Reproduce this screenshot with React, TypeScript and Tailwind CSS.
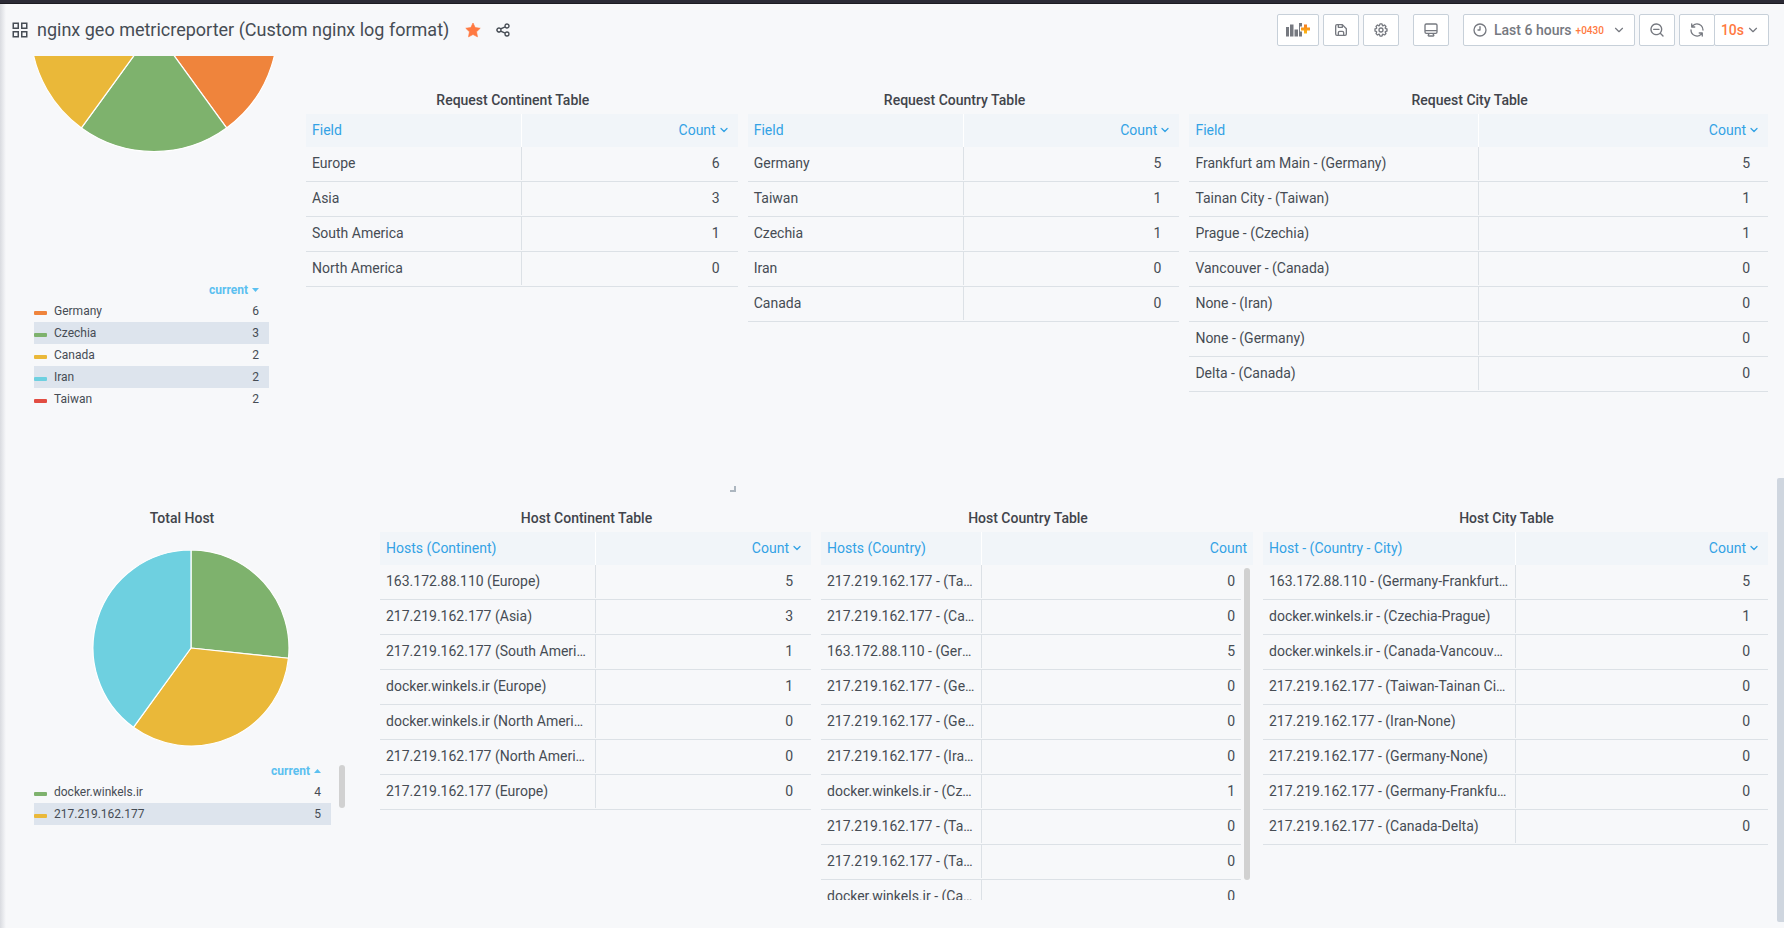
import React from "react";
import { ChevronDown } from "lucide-react";

type Row = [string, number];

const requestContinent: Row[] = [
  ["Europe", 6],
  ["Asia", 3],
  ["South America", 1],
  ["North America", 0],
];

const requestCountry: Row[] = [
  ["Germany", 5],
  ["Taiwan", 1],
  ["Czechia", 1],
  ["Iran", 0],
  ["Canada", 0],
];

const requestCity: Row[] = [
  ["Frankfurt am Main - (Germany)", 5],
  ["Tainan City - (Taiwan)", 1],
  ["Prague - (Czechia)", 1],
  ["Vancouver - (Canada)", 0],
  ["None - (Iran)", 0],
  ["None - (Germany)", 0],
  ["Delta - (Canada)", 0],
];

const hostContinent: Row[] = [
  ["163.172.88.110 (Europe)", 5],
  ["217.219.162.177 (Asia)", 3],
  ["217.219.162.177 (South America)", 1],
  ["docker.winkels.ir (Europe)", 1],
  ["docker.winkels.ir (North America)", 0],
  ["217.219.162.177 (North America)", 0],
  ["217.219.162.177 (Europe)", 0],
];

const hostCountry: Row[] = [
  ["217.219.162.177 - (Taiwan)", 0],
  ["217.219.162.177 - (Canada)", 0],
  ["163.172.88.110 - (Germany)", 5],
  ["217.219.162.177 - (Germany)", 0],
  ["217.219.162.177 - (Germany)", 0],
  ["217.219.162.177 - (Iran, Islamic Republic)", 0],
  ["docker.winkels.ir - (Czechia)", 1],
  ["217.219.162.177 - (Taiwan)", 0],
  ["217.219.162.177 - (Taiwan)", 0],
  ["docker.winkels.ir - (Canada)", 0],
];

const hostCity: Row[] = [
  ["163.172.88.110 - (Germany-Frankfurt am Main)", 5],
  ["docker.winkels.ir - (Czechia-Prague)", 1],
  ["docker.winkels.ir - (Canada-Vancouver)", 0],
  ["217.219.162.177 - (Taiwan-Tainan City)", 0],
  ["217.219.162.177 - (Iran-None)", 0],
  ["217.219.162.177 - (Germany-None)", 0],
  ["217.219.162.177 - (Germany-Frankfurt am Main)", 0],
  ["217.219.162.177 - (Canada-Delta)", 0],
];

type Slice = { value: number; color: string };

const countrySlices: Slice[] = [
  { value: 6, color: "#EF843C" },
  { value: 3, color: "#7EB26D" },
  { value: 2, color: "#EAB839" },
  { value: 2, color: "#6ED0E0" },
  { value: 2, color: "#E24D42" },
];

const hostSlices: Slice[] = [
  { value: 4, color: "#7EB26D" },
  { value: 5, color: "#EAB839" },
  { value: 6, color: "#6ED0E0" },
];

function PieSlices({ slices, cx, cy, r }: { slices: Slice[]; cx: number; cy: number; r: number }) {
  const total = slices.reduce((sum, s) => sum + s.value, 0);
  let angle = 0;
  return (
    <g stroke="#ffffff" strokeWidth="1.2" strokeLinejoin="round">
      {slices.map((s, i) => {
        const start = angle;
        const end = angle + (s.value / total) * Math.PI * 2;
        angle = end;
        const large = end - start > Math.PI ? 1 : 0;
        const d = `M${cx} ${cy}L${cx + r * Math.sin(start)} ${cy - r * Math.cos(start)}A${r} ${r} 0 ${large} 1 ${cx + r * Math.sin(end)} ${cy - r * Math.cos(end)}Z`;
        return <path key={i} d={d} fill={s.color} />;
      })}
    </g>
  );
}

function DataTable({
  title,
  field,
  rows,
  cols,
  scroll = false,
}: {
  title: string;
  field: string;
  rows: Row[];
  cols: string;
  scroll?: boolean;
}) {
  return (
    <section className="min-w-0">
      <h2 className="h-7 pr-[18px] text-center text-sm leading-7 font-medium text-[#41444b]">{title}</h2>
      <div className={scroll ? "relative h-[368px] overflow-hidden" : ""}>
        <table className="block w-full">
          <thead className="block">
            <tr className={`grid h-[33px] bg-[#f1f5f9] text-[#33a2e5] ${cols}`}>
              <th className="truncate border-r border-white pl-1.5 text-left text-sm leading-8 font-normal">{field}</th>
              <th className={`flex h-8 items-center justify-end text-sm leading-8 font-normal ${scroll ? "pr-1.5" : "pr-2"}`}>
                Count
                {!scroll && <ChevronDown className="ml-0.5 size-3" strokeWidth={2.6} />}
              </th>
            </tr>
          </thead>
          <tbody className={scroll ? "block pr-3" : "block"}>
            {rows.map(([name, count], i) => (
              <tr key={i} className={`grid h-[35px] border-b border-[#dce1e6] pb-px ${cols}`}>
                <td className="truncate border-r border-[#dce1e6] pr-1.5 pl-1.5 text-sm leading-8">{name}</td>
                <td className={`text-right text-sm leading-8 ${scroll ? "pr-1.5" : "pr-[18px]"}`}>{count}</td>
              </tr>
            ))}
          </tbody>
        </table>
        {scroll && <div className="absolute top-9 right-[3px] h-[312px] w-1.5 rounded-full bg-[#d1d1d1]" />}
      </div>
    </section>
  );
}

type LegendRow = { name: string; value: number; swatch: string };

function Legend({ rows, ascending = false }: { rows: LegendRow[]; ascending?: boolean }) {
  return (
    <table className="block w-full text-xs">
      <thead className="block">
        <tr className="flex h-[22px] justify-end pt-0.5 pr-2.5">
          <th className="flex items-center gap-1 font-bold text-[#5bc0f0]">
            current
            <svg className="w-[7px]" viewBox="0 0 7 4" fill="currentColor" aria-hidden="true">
              {ascending ? <path d="M0 4h7L3.500 0z" /> : <path d="M0 0h7L3.500 4z" />}
            </svg>
          </th>
        </tr>
      </thead>
      <tbody className="block">
        {rows.map((row) => (
          <tr key={row.name} className="flex h-[22px] items-center pr-2.5 even:bg-[#dde4ed]">
            <td className="flex flex-1 items-center gap-[7px]">
              <span className={`mt-1 h-1 w-[13px] rounded-[1px] ${row.swatch}`} />
              {row.name}
            </td>
            <td>{row.value}</td>
          </tr>
        ))}
      </tbody>
    </table>
  );
}

const iconButton =
  "flex h-8 w-9 items-center justify-center rounded-xs border border-[#c7d0d9] bg-white text-[#767980]";

function Toolbar() {
  return (
    <div className="flex items-center gap-1">
      <button aria-label="Add panel" className="flex h-8 w-[42px] items-center justify-center rounded-xs border border-[#c7d0d9] bg-white text-[#767980]">
        <svg className="h-4 w-[26px]" viewBox="0 0 26 16" aria-hidden="true">
          <defs>
            <linearGradient id="plus" x1="0" y1="0" x2="0" y2="1">
              <stop offset="0" stopColor="#f47b20" />
              <stop offset="1" stopColor="#fdb913" />
            </linearGradient>
          </defs>
          <path fill="currentColor" d="M1 5h3v9.500H1zM5 2.500h3.500v12H5zM9.500 7.500H13v7H9.500zM14 1h3v3.500h-2v5h2v5h-3z" />
          <path fill="url(#plus)" d="M19 2.500h3v3h3v3h-3v3h-3v-3h-3v-3h3z" />
        </svg>
      </button>
      <button aria-label="Save dashboard" className={iconButton}>
        <svg className="size-4" viewBox="0 0 24 24" fill="currentColor" aria-hidden="true">
          <path d="m20.710 9.290-6-6a1 1 0 0 0-.320-.210A1.090 1.090 0 0 0 14 3H6a3 3 0 0 0-3 3v12a3 3 0 0 0 3 3h12a3 3 0 0 0 3-3v-8a1 1 0 0 0-.290-.710ZM9 5h4v2H9Zm6 14H9v-3a1 1 0 0 1 1-1h4a1 1 0 0 1 1 1Zm4-1a1 1 0 0 1-1 1h-1v-3a3 3 0 0 0-3-3h-4a3 3 0 0 0-3 3v3H6a1 1 0 0 1-1-1V6a1 1 0 0 1 1-1h1v3a1 1 0 0 0 1 1h6a1 1 0 0 0 1-1V6.410l4 4Z" />
        </svg>
      </button>
      <button aria-label="Dashboard settings" className={iconButton}>
        <svg className="size-4" viewBox="0 0 24 24" fill="currentColor" aria-hidden="true">
          <path d="m21.320 9.550-1.890-.630.890-1.780A1 1 0 0 0 20.130 6L18 3.870a1 1 0 0 0-1.150-.190l-1.780.890-.630-1.890A1 1 0 0 0 13.500 2h-3a1 1 0 0 0-.950.680l-.630 1.890-1.780-.890A1 1 0 0 0 6 3.870L3.870 6a1 1 0 0 0-.190 1.150l.890 1.780-1.890.630A1 1 0 0 0 2 10.500v3a1 1 0 0 0 .680.950l1.890.630-.890 1.780A1 1 0 0 0 3.870 18L6 20.130a1 1 0 0 0 1.150.190l1.780-.890.630 1.890a1 1 0 0 0 .950.680h3a1 1 0 0 0 .950-.680l.630-1.890 1.780.890a1 1 0 0 0 1.130-.190L20.130 18a1 1 0 0 0 .190-1.150l-.890-1.780 1.890-.630A1 1 0 0 0 22 13.500v-3a1 1 0 0 0-.680-.950ZM20 12.780l-1.200.400a2 2 0 0 0-1.220 2.830l.570 1.140-1.100 1.100-1.140-.570a2 2 0 0 0-2.830 1.200l-.400 1.200h-1.560l-.400-1.200a2 2 0 0 0-2.830-1.200l-1.140.570-1.100-1.100.570-1.140a2 2 0 0 0-1.200-2.830l-1.200-.400v-1.560l1.200-.400a2 2 0 0 0 1.200-2.830l-.570-1.140 1.100-1.100 1.140.570a2 2 0 0 0 2.830-1.200l.400-1.200h1.560l.400 1.200a2 2 0 0 0 2.830 1.200l1.140-.570 1.100 1.100-.570 1.140a2 2 0 0 0 1.200 2.830l1.200.400ZM12 8a4 4 0 1 0 0 8 4 4 0 0 0 0-8Zm0 6a2 2 0 1 1 0-4 2 2 0 0 1 0 4Z" />
        </svg>
      </button>
      <button aria-label="Cycle view mode" className={`mx-2.5 ${iconButton}`}>
        <svg className="size-4" viewBox="0 0 24 24" fill="currentColor" aria-hidden="true">
          <path d="M19 2H5a3 3 0 0 0-3 3v10a3 3 0 0 0 3 3h2.640l-.580 1a2 2 0 0 0 0 2 2 2 0 0 0 1.750 1h6.460A2 2 0 0 0 17 21a2 2 0 0 0 0-2l-.590-1H19a3 3 0 0 0 3-3V5a3 3 0 0 0-3-3ZM8.770 20 10 18h4l1.200 2ZM20 15a1 1 0 0 1-1 1H5a1 1 0 0 1-1-1v-1h16Zm0-3H4V5a1 1 0 0 1 1-1h14a1 1 0 0 1 1 1Z" />
        </svg>
      </button>
      <button className="flex h-8 items-center rounded-xs border border-[#c7d0d9] bg-white px-2 text-sm font-medium text-[#767980]">
        <svg className="mr-1.5 size-4" viewBox="0 0 24 24" fill="currentColor" aria-hidden="true">
          <path d="M12 2a10 10 0 1 0 0 20 10 10 0 0 0 0-20Zm0 18a8 8 0 1 1 0-16 8 8 0 0 1 0 16Zm0-14a1 1 0 0 0-1 1v4H9a1 1 0 0 0 0 2h3a1 1 0 0 0 1-1V7a1 1 0 0 0-1-1Z" />
        </svg>
        Last 6 hours
        <span className="mt-0.5 ml-1 text-[10px] text-[#ff7941]">+0430</span>
        <ChevronDown className="ml-2 size-3.5" />
      </button>
      <button aria-label="Zoom out" className={iconButton}>
        <svg className="size-4" viewBox="0 0 24 24" fill="currentColor" aria-hidden="true">
          <path d="M21.710 20.290 18 16.610A9 9 0 1 0 16.610 18l3.680 3.680a1 1 0 0 0 1.420 0 1 1 0 0 0 0-1.390ZM11 18a7 7 0 1 1 0-14 7 7 0 0 1 0 14Zm4-8H7a1 1 0 0 0 0 2h8a1 1 0 0 0 0-2Z" />
        </svg>
      </button>
      <div className="flex">
        <button aria-label="Refresh" className={iconButton}>
          <svg className="size-4" viewBox="0 0 24 24" fill="currentColor" aria-hidden="true">
            <path d="M19.910 15.510h-4.530a1 1 0 0 0 0 2h2.400A8 8 0 0 1 4 12a1 1 0 0 0-2 0 10 10 0 0 0 16.880 7.230V21a1 1 0 0 0 2 0v-4.500a1 1 0 0 0-.970-.990ZM12 2a10 10 0 0 0-6.880 2.770V3a1 1 0 0 0-2 0v4.500a1 1 0 0 0 1 1h4.500a1 1 0 0 0 0-2h-2.400A8 8 0 0 1 20 12a1 1 0 0 0 2 0A10 10 0 0 0 12 2Z" />
          </svg>
        </button>
        <button className="-ml-px flex h-8 items-center rounded-xs border border-[#c7d0d9] bg-white pr-2 pl-1.5 text-sm font-medium text-[#ff7941]">
          10s
          <ChevronDown className="ml-0.5 size-3.5 text-[#767980]" />
        </button>
      </div>
    </div>
  );
}

export default function App() {
  return (
    <div className="relative flex h-screen flex-col overflow-hidden bg-[#f7f8fa] font-[Roboto,sans-serif] text-[#464c54]">
      <div className="h-1 shrink-0 border-b border-[#1c1b22] bg-[#2c2b36]" />
      <header className="flex h-[52px] shrink-0 items-center justify-between pr-[15px] pl-3">
        <div className="flex items-center">
          <svg className="size-4" viewBox="0 0 16 16" fill="none" stroke="currentColor" strokeWidth="1.500" aria-hidden="true">
            <path d="M1.250 1.250h5v5h-5zM9.750 1.250h5v5h-5zM1.250 9.750h5v5h-5zM9.750 9.750h5v5h-5z" />
          </svg>
          <h1 className="ml-[9px] text-lg leading-7">
            <a href="#dashboard">nginx geo metricreporter (Custom nginx log format)</a>
          </h1>
          <button aria-label="Unmark as favorite" className="ml-4 text-[#ff7941]">
            <svg className="size-4" viewBox="0 0 24 24" fill="currentColor" aria-hidden="true">
              <path d="M12 1.500 15.300 8.400 22.800 9.400 17.300 14.700 18.700 22.300 12 18.700 5.300 22.300 6.700 14.700 1.200 9.400 8.700 8.400Z" stroke="currentColor" strokeLinejoin="round" />
            </svg>
          </button>
          <button aria-label="Share dashboard" className="ml-3.5">
            <svg className="size-4" viewBox="0 0 24 24" fill="currentColor" aria-hidden="true">
              <path d="M18 14a4 4 0 0 0-3.080 1.480l-5.100-2.350a3.640 3.640 0 0 0 0-2.260l5.100-2.350A4 4 0 1 0 14 6a4.170 4.170 0 0 0 .070.710L8.790 9.140a4 4 0 1 0 0 5.720l5.280 2.430A4.170 4.170 0 0 0 14 18a4 4 0 1 0 4-4Zm0-10a2 2 0 1 1 0 4 2 2 0 0 1 0-4ZM6 14a2 2 0 1 1 0-4 2 2 0 0 1 0 4Zm12 6a2 2 0 1 1 0-4 2 2 0 0 1 0 4Z" />
            </svg>
          </button>
        </div>
        <Toolbar />
      </header>

      <main className="flex min-h-0 flex-1 flex-col pr-4">
        <div className="relative grid h-[448px] shrink-0 grid-cols-[296px_432fr_432fr_579fr] gap-2.5">
          <section className="pl-[30px]">
            <svg className="block h-24 w-[248px]" viewBox="0 0 248 96" role="img" aria-label="Total by country">
              <PieSlices slices={countrySlices} cx={124} cy={-28} r={123.500} />
            </svg>
            <div className="mt-[126px] ml-1 w-[235px]">
              <Legend
                rows={[
                  { name: "Germany", value: 6, swatch: "bg-[#EF843C]" },
                  { name: "Czechia", value: 3, swatch: "bg-[#7EB26D]" },
                  { name: "Canada", value: 2, swatch: "bg-[#EAB839]" },
                  { name: "Iran", value: 2, swatch: "bg-[#6ED0E0]" },
                  { name: "Taiwan", value: 2, swatch: "bg-[#E24D42]" },
                ]}
              />
            </div>
          </section>
          <div className="relative pt-[30px]">
            <DataTable title="Request Continent Table" field="Field" rows={requestContinent} cols="grid-cols-2" />
            <div className="absolute right-0.5 bottom-3 size-1.5 border-r-2 border-b-2 border-[#acb6bf]" />
          </div>
          <div className="pt-[30px]">
            <DataTable title="Request Country Table" field="Field" rows={requestCountry} cols="grid-cols-2" />
          </div>
          <div className="pt-[30px]">
            <DataTable title="Request City Table" field="Field" rows={requestCity} cols="grid-cols-2" />
          </div>
        </div>

        <div className="grid grid-cols-[370px_431fr_432fr_505fr] gap-2.5">
          <section>
            <h2 className="h-7 pr-1.5 text-center text-sm leading-7 font-medium text-[#41444b]">Total Host</h2>
            <svg className="mt-[18px] ml-[92px] block size-[198px]" viewBox="0 0 198 198" role="img" aria-label="Total by host">
              <PieSlices slices={hostSlices} cx={99} cy={98} r={98} />
            </svg>
            <div className="mt-[11px] ml-[34px] flex gap-2">
              <div className="w-[297px]">
                <Legend
                  ascending
                  rows={[
                    { name: "docker.winkels.ir", value: 4, swatch: "bg-[#7EB26D]" },
                    { name: "217.219.162.177", value: 5, swatch: "bg-[#EAB839]" },
                  ]}
                />
              </div>
              <div className="mt-1.5 h-[43px] w-1.5 rounded-full bg-[#d1d1d1]" />
            </div>
          </section>
          <DataTable title="Host Continent Table" field="Hosts (Continent)" rows={hostContinent} cols="grid-cols-2" />
          <DataTable
            title="Host Country Table"
            field="Hosts (Country)"
            rows={hostCountry}
            cols="grid-cols-[161px_1fr]"
            scroll
          />
          <DataTable title="Host City Table" field="Host - (Country - City)" rows={hostCity} cols="grid-cols-2" />
        </div>
      </main>

      <div className="absolute top-1 bottom-0 left-0 w-1.5 bg-linear-to-r from-[#d9dbe0] to-transparent" />
      <div className="absolute top-[478px] right-0 bottom-1.5 w-[7px] rounded-l-xs bg-[#cfd6df]" />
    </div>
  );
}
